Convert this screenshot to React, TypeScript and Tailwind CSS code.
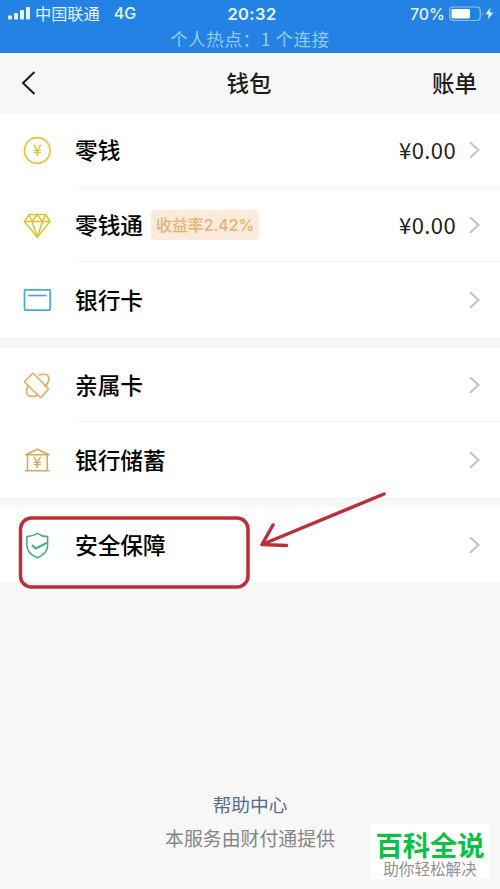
import type { ReactNode } from 'react';

interface WalletItem {
  label: string;
  icon: ReactNode;
  amount?: string;
  badge?: string;
}

function CoinIcon() {
  return (
    <svg width="30" height="30" viewBox="0 0 30 30" fill="none" stroke="#e6c53c" strokeWidth="1.7">
      <circle cx="15.3" cy="15.5" r="12.8" />
      <text x="15.3" y="21" textAnchor="middle" fontSize="15.5" fontWeight="500" fill="#e2bf36" stroke="none">
        ¥
      </text>
    </svg>
  );
}

function DiamondIcon() {
  return (
    <svg width="30" height="30" viewBox="0 0 30 30" fill="none" stroke="#e3c02c" strokeWidth="1.5" strokeLinejoin="round">
      <path d="M7 4.5h16.500l4.500 7L15.300 27.200 2.300 11.500z" />
      <path d="M2.300 11.500h25.700M7 4.500l3 7 5.300 15.700L20.500 11.500l3-7M10 11.500l5.300-7 5.200 7" />
    </svg>
  );
}

function BankCardIcon() {
  return (
    <svg width="30" height="30" viewBox="0 0 30 30" fill="none" stroke="#48a9d3" strokeWidth="1.7">
      <rect x="2.5" y="4.800" width="25.700" height="20.400" rx="0.6" />
      <path d="M6 10.500h18.500" />
    </svg>
  );
}

function FamilyCardIcon() {
  return (
    <svg width="30" height="30" viewBox="0 0 30 30" fill="none" stroke="#e5a85c" strokeWidth="1.6" strokeLinejoin="round" strokeLinecap="round">
      <path d="M10.300 3.700Q11 3.100 11.700 3.800L26 18.300Q26.600 19 26 19.700L19.500 27Q18.700 27.800 17.900 27L3 12.500Q2.300 11.800 3 11z" />
      <path d="M17 4.900C23.500 3.200 27 4.500 26.800 9C26.700 11.400 25 14.400 23 16.300" />
      <path d="M6 16C4.500 19 4 22 5 24.100C7 27 11.500 26.900 15.700 25.200" />
    </svg>
  );
}

function BankIcon() {
  return (
    <svg width="30" height="30" viewBox="0 0 30 30" fill="none" stroke="#dca656" strokeWidth="1.5" strokeLinejoin="round">
      <path d="M3.500 9.800L15.300 4.200l11.700 5.600zM5.500 10v15.600M25.200 10v15.600M3 25.800h24.700" />
      <text x="15.300" y="23.200" textAnchor="middle" fontSize="15" fontWeight="500" fill="#dca656" stroke="none">
        ¥
      </text>
    </svg>
  );
}

function ShieldIcon() {
  return (
    <svg width="30" height="30" viewBox="0 0 30 30" fill="none" stroke="#43ae7c" strokeWidth="1.6" strokeLinejoin="round">
      <path d="M15.300 3.300C18.500 5.500 21.600 6.500 25.600 6.600V15.500c0 5-3.200 9.200-10.300 12.300C8 24.700 4.900 20.500 4.900 15.500V6.600C8.700 6.500 12 5.500 15.300 3.300z" />
      <path d="M10 15l3.700 3.500L25.300 12.700" strokeWidth="2" />
    </svg>
  );
}

const groups: WalletItem[][] = [
  [
    { label: '零钱', icon: <CoinIcon />, amount: '¥0.00' },
    { label: '零钱通', icon: <DiamondIcon />, amount: '¥0.00', badge: '收益率2.42%' },
    { label: '银行卡', icon: <BankCardIcon /> },
  ],
  [
    { label: '亲属卡', icon: <FamilyCardIcon /> },
    { label: '银行储蓄', icon: <BankIcon /> },
  ],
  [{ label: '安全保障', icon: <ShieldIcon /> }],
];

function StatusBar() {
  return (
    <header className="h-[53px] bg-[#2582e5] text-[#e4f7ff]">
      <div className="grid h-[27px] grid-cols-3 items-center pl-2 pr-1.5">
        <div className="flex items-center">
          <svg width="23" height="13" viewBox="0 0 23 13" fill="currentColor">
            <rect x="0" y="8.500" width="4" height="4" rx="1" />
            <rect x="6" y="6" width="4" height="6.500" rx="1" />
            <rect x="12" y="3" width="4" height="9.500" rx="1" />
            <rect x="18" y="0" width="4" height="12.500" rx="1" />
          </svg>
          <span className="ml-1 text-[16.2px] leading-none">中国联通</span>
          <span className="ml-3.5 font-[Inter] text-[16px] font-medium leading-none">4G</span>
        </div>
        <div className="pl-0.5 pt-0.5 text-center font-[Inter] text-[16.5px] font-semibold leading-none tracking-[0.4px]">20:32</div>
        <div className="flex items-center justify-end">
          <span className="font-[Inter] text-[16px] font-medium leading-none">70%</span>
          <svg className="ml-1" width="36" height="16" viewBox="0 0 36 16">
            <rect x="0.700" y="1" width="30.500" height="13.500" rx="3.500" fill="none" stroke="#8fc3f4" strokeWidth="1.200" />
            <rect x="2.500" y="3" width="18.500" height="9.500" rx="1.500" fill="#fff" />
            <path d="M33 5.500q1.800 2.300 0 4.600z" fill="#8fc3f4" />
          </svg>
          <svg width="9" height="13" viewBox="0 0 9 13" fill="currentColor">
            <path d="M5.500 0.500L0.500 7.200h3.200L2.800 12.500 8.200 5.500H4.800z" />
          </svg>
        </div>
      </div>
      <p className="text-center text-[17.5px] leading-[24px] tracking-[0.6px] text-[#92cbf6]">个人热点：1 个连接</p>
    </header>
  );
}

function NavBar() {
  return (
    <nav className="grid h-[60px] grid-cols-3 items-center bg-[#f7f7f7] pl-[21px] pr-[23px] text-[22.5px] font-medium text-[#1c1c1c]">
      <svg width="16" height="26" viewBox="0 0 16 26" fill="none" stroke="currentColor" strokeWidth="2">
        <path d="M13.500 2L2 13l11.500 11" />
      </svg>
      <h1 className="text-center">钱包</h1>
      <span className="text-right">账单</span>
    </nav>
  );
}

function WalletRow({ item, last }: { item: WalletItem; last: boolean }) {
  return (
    <li className="flex h-[74.7px] items-center pl-[22px]">
      {item.icon}
      <div className={`ml-[23px] flex h-full flex-1 items-center pr-[18px] ${last ? '' : 'border-b border-[#f3f3f3]'}`}>
        <span className="pt-px text-[22.7px] font-medium text-black">{item.label}</span>
        {item.badge && (
          <span className="ml-[8px] flex h-[30px] items-center rounded bg-[#fcebdc] pl-[5px] pr-[5px] pt-0.5 font-[Inter,'Noto_Sans_CJK_SC',sans-serif] text-[15.9px] font-medium text-[#e5b26c]">
            {item.badge}
          </span>
        )}
        <span className="ml-auto text-[22px] tracking-[0.4px] text-[#222]">{item.amount}</span>
        <svg className="ml-3 mt-px" width="14" height="20" viewBox="0 0 14 20" fill="none" stroke="#c4c4c4" strokeWidth="2">
          <path d="M2 2.300L10.500 10l-8.500 7.700" />
        </svg>
      </div>
    </li>
  );
}

export default function App() {
  return (
    <div className="relative flex h-[889px] w-[500px] flex-col overflow-hidden bg-[#f7f7f7] font-['Noto_Sans_CJK_SC',sans-serif]">
      <StatusBar />
      <NavBar />
      <main className="flex flex-col gap-[10.5px]">
        {groups.map((group, index) => (
          <ul key={index} className="bg-white">
            {group.map((item, i) => (
              <WalletRow key={item.label} item={item} last={i === group.length - 1} />
            ))}
          </ul>
        ))}
      </main>

      <footer className="mt-auto pb-[34px] text-center">
        <p className="text-[18.7px] leading-[34px] text-[#596b87]">帮助中心</p>
        <p className="text-[18.9px] leading-[34px] text-[#858585]">本服务由财付通提供</p>
      </footer>

      {/* Watermark */}
      <div className="absolute bottom-[10px] right-[10px] flex h-[55px] w-[120px] flex-col items-center bg-white">
        <span className="mt-[4px] text-[27.3px] font-bold leading-[32px] text-[#0cc142]">百科全说</span>
        <span className="text-[15.6px] leading-[17px] text-[#909090]">助你轻松解决</span>
      </div>

      {/* Highlight box and arrow */}
      <svg className="pointer-events-none absolute inset-0" width="500" height="889" fill="none" stroke="#bd2f38" strokeWidth="3.5" strokeLinecap="round" strokeLinejoin="round">
        <rect x="20.500" y="518" width="227.500" height="69" rx="11" />
        <path d="M384 494L262 544.500M273 525L262 544.500l24.500 1" />
      </svg>
    </div>
  );
}
